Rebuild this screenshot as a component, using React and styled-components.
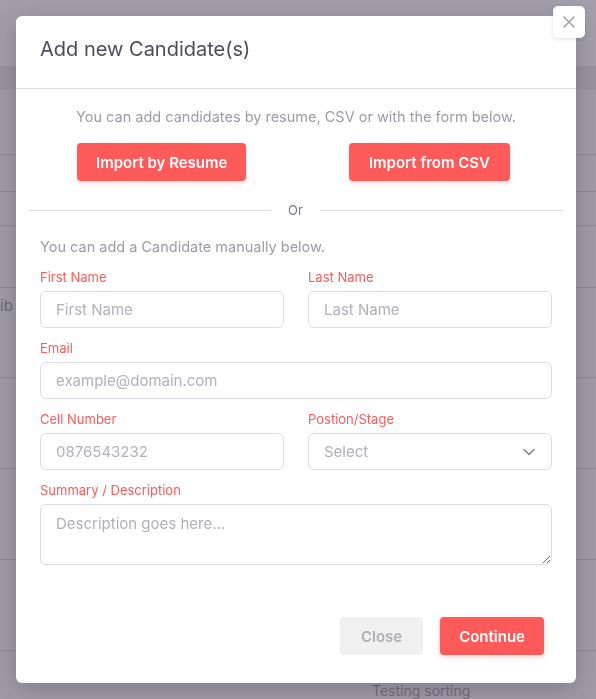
import React from "react";
import styled, { createGlobalStyle } from "styled-components";

const Global = createGlobalStyle`
  * { box-sizing: border-box; }
  html, body { margin: 0; padding: 0; }
  body {
    background: #9f9ba8;
    font-family: Inter, "Noto Sans", sans-serif;
    overflow: hidden;
  }
`;

const Backdrop = styled.div`
  width: 596px;
  height: 699px;
  background: #9f9ba8;
  display: flex;
  flex-direction: column;
  overflow: hidden;
`;

const TopBand = styled.div`
  height: 66px;
  background: #a29eab;
  flex: none;
`;

const SubBand = styled.div`
  height: 24px;
  background: #98949f;
  flex: none;
`;

const BgRow = styled.div`
  flex: none;
  height: ${(p) => p.$h}px;
  border-bottom: 1px solid #8e8a97;
  display: flex;
  align-items: flex-start;
  font-size: 15px;
  color: #6e6a78;
`;

const EdgeText = styled.div`
  margin-top: ${(p) => p.$top}px;
  white-space: nowrap;
`;

const SortText = styled.div`
  margin-left: 372px;
  margin-top: ${(p) => p.$top}px;
  font-size: 14px;
  color: #73707d;
  white-space: nowrap;
`;

const Modal = styled.div`
  position: fixed;
  top: 16px;
  left: 16px;
  width: 560px;
  height: 667px;
  background: #fff;
  border-radius: 6px;
  box-shadow: 0 6px 24px rgba(40, 35, 55, 0.25);
  display: flex;
  flex-direction: column;
`;

const CloseX = styled.button`
  position: absolute;
  top: -10px;
  right: -9px;
  width: 32px;
  height: 32px;
  border: none;
  border-radius: 5px;
  background: #fff;
  box-shadow: 0 1px 4px rgba(0, 0, 0, 0.12);
  display: flex;
  align-items: center;
  justify-content: center;
  padding: 0;
  cursor: pointer;
`;

const Header = styled.div`
  height: 73px;
  flex: none;
  padding: 21px 24px 0;
  border-bottom: 1px solid #dcdce2;
`;

const Title = styled.h2`
  margin: 0;
  font-size: 20px;
  line-height: 24px;
  font-weight: 400;
  color: #4d4c5e;
`;

const Body = styled.div`
  display: flex;
  flex-direction: column;
  flex: 1;
`;

const Intro = styled.p`
  margin: 18px 0 0;
  font-size: 14.5px;
  line-height: 20px;
  text-align: center;
  color: #9c9ba8;
`;

const ImportRow = styled.div`
  display: flex;
  justify-content: space-between;
  padding: 0 66px 0 61px;
  margin-top: 16px;
`;

const PrimaryButton = styled.button`
  height: 38px;
  padding: 0 ${(p) => p.$px || 20}px;
  border: none;
  border-radius: 4px;
  background: #ff5a5a;
  color: #fff;
  font-family: inherit;
  font-size: 15px;
  font-weight: 600;
  box-shadow: 0 2px 5px rgba(255, 90, 90, 0.25);
  cursor: pointer;
`;

const Divider = styled.div`
  display: flex;
  align-items: center;
  gap: 17px;
  margin: 21px 13px 0 12px;
  height: 16px;
  font-size: 13px;
  color: #7a7986;

  &::before,
  &::after {
    content: "";
    flex: 1;
    height: 1px;
    background: #dddde2;
  }
`;

const Manual = styled.p`
  margin: 19px 24px 0;
  font-size: 14.5px;
  line-height: 20px;
  color: #9c9ba8;
`;

const Form = styled.div`
  padding: 0 24px;
  margin-top: 11px;
  display: flex;
  flex-direction: column;
  gap: 11px;
`;

const Row = styled.div`
  display: grid;
  grid-template-columns: 1fr 1fr;
  gap: 24px;
`;

const Field = styled.div`
  display: flex;
  flex-direction: column;
  gap: 5px;
`;

const Label = styled.label`
  font-size: 13px;
  line-height: 18px;
  color: #ff5a5a;
`;

const inputStyles = `
  width: 100%;
  border: 1px solid #dcdce2;
  border-radius: 6px;
  background: #fff;
  font-family: inherit;
  font-size: 15px;
  color: #4d4c5e;
  padding: 0 15px;
  outline: none;
  &::placeholder { color: #b1b0bb; }
`;

const Input = styled.input`
  ${inputStyles}
  height: 37px;
`;

const SelectBox = styled.div`
  ${inputStyles}
  height: 37px;
  display: flex;
  align-items: center;
  justify-content: space-between;
  color: #b1b0bb;
  padding-right: 16px;
`;

const TextArea = styled.textarea`
  ${inputStyles}
  height: 61px;
  padding: 9px 15px;
  resize: vertical;
  display: block;
`;

const Footer = styled.div`
  margin-top: auto;
  display: flex;
  justify-content: flex-end;
  gap: 17px;
  padding: 0 32px 28px;
`;

const GhostButton = styled.button`
  height: 38px;
  padding: 0 21px;
  border: none;
  border-radius: 4px;
  background: #f0f0f1;
  color: #b0afb9;
  font-family: inherit;
  font-size: 15px;
  font-weight: 600;
  cursor: pointer;
`;

const rows = [
  { h: 65 },
  { h: 37 },
  { h: 34 },
  { h: 62 },
  { h: 90, edge: "ib", top: 8 },
  { h: 91 },
  { h: 91 },
  { h: 91 },
  { h: 91, sort: "Testing sorting", top: 31 },
];

export default function App() {
  return (
    <>
      <Global />
      <Backdrop>
        <TopBand />
        <SubBand />
        {rows.map((r, i) => (
          <BgRow key={i} $h={r.h}>
            {r.edge && <EdgeText $top={r.top}>{r.edge}</EdgeText>}
            {r.sort && <SortText $top={r.top}>{r.sort}</SortText>}
          </BgRow>
        ))}
      </Backdrop>
      <Modal>
        <CloseX aria-label="Close">
          <svg width="12" height="12" viewBox="0 0 12 12">
            <path d="M1 1 L11 11 M11 1 L1 11" stroke="#a3a2ad" strokeWidth="1.6" strokeLinecap="round" />
          </svg>
        </CloseX>
        <Header>
          <Title>Add new Candidate(s)</Title>
        </Header>
        <Body>
          <Intro>You can add candidates by resume, CSV or with the form below.</Intro>
          <ImportRow>
            <PrimaryButton $px={19}>Import by Resume</PrimaryButton>
            <PrimaryButton $px={20}>Import from CSV</PrimaryButton>
          </ImportRow>
          <Divider>Or</Divider>
          <Manual>You can add a Candidate manually below.</Manual>
          <Form>
            <Row>
              <Field>
                <Label>First Name</Label>
                <Input placeholder="First Name" />
              </Field>
              <Field>
                <Label>Last Name</Label>
                <Input placeholder="Last Name" />
              </Field>
            </Row>
            <Field>
              <Label>Email</Label>
              <Input placeholder="example@domain.com" />
            </Field>
            <Row>
              <Field>
                <Label>Cell Number</Label>
                <Input placeholder="0876543232" />
              </Field>
              <Field>
                <Label>Postion/Stage</Label>
                <SelectBox>
                  <span>Select</span>
                  <svg width="12" height="8" viewBox="0 0 12 8">
                    <path d="M1 1.5 L6 6.5 L11 1.5" fill="none" stroke="#7d7c88" strokeWidth="1.4" strokeLinecap="round" strokeLinejoin="round" />
                  </svg>
                </SelectBox>
              </Field>
            </Row>
            <Field>
              <Label>Summary / Description</Label>
              <TextArea placeholder="Description goes here..." />
            </Field>
          </Form>
          <Footer>
            <GhostButton>Close</GhostButton>
            <PrimaryButton $px={19}>Continue</PrimaryButton>
          </Footer>
        </Body>
      </Modal>
    </>
  );
}
